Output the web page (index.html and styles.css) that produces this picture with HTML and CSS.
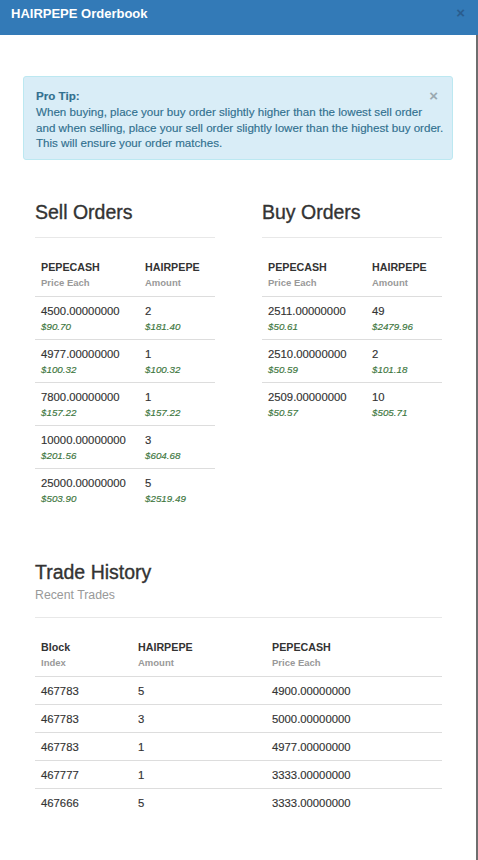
FILE: index.html
```html
<!DOCTYPE html>
<html>
<head>
<meta charset="utf-8">
<title>HAIRPEPE Orderbook</title>
<link rel="stylesheet" href="styles.css">
</head>
<body>
<div class="modal">
  <header class="modal-header">
    <h1 class="modal-title">HAIRPEPE Orderbook</h1>
    <span class="header-close">×</span>
  </header>
  <main class="modal-body">
    <div class="alert">
      <span class="alert-close">×</span>
      <strong>Pro Tip:</strong><br>
      When buying, place your buy order slightly higher than the lowest sell order<br>
      and when selling, place your sell order slightly lower than the highest buy order.<br>
      This will ensure your order matches.
    </div>

    <div class="books">
      <section class="book">
        <h2 class="section-title">Sell Orders</h2>
        <hr class="rule">
        <table class="orders">
          <thead>
            <tr><th class="c1">PEPECASH<small>Price Each</small></th><th>HAIRPEPE<small>Amount</small></th></tr>
          </thead>
          <tbody>
            <tr><td>4500.00000000<em>$90.70</em></td><td>2<em>$181.40</em></td></tr>
            <tr><td>4977.00000000<em>$100.32</em></td><td>1<em>$100.32</em></td></tr>
            <tr><td>7800.00000000<em>$157.22</em></td><td>1<em>$157.22</em></td></tr>
            <tr><td>10000.00000000<em>$201.56</em></td><td>3<em>$604.68</em></td></tr>
            <tr><td>25000.00000000<em>$503.90</em></td><td>5<em>$2519.49</em></td></tr>
          </tbody>
        </table>
      </section>
      <section class="book">
        <h2 class="section-title">Buy Orders</h2>
        <hr class="rule">
        <table class="orders">
          <thead>
            <tr><th class="c1">PEPECASH<small>Price Each</small></th><th>HAIRPEPE<small>Amount</small></th></tr>
          </thead>
          <tbody>
            <tr><td>2511.00000000<em>$50.61</em></td><td>49<em>$2479.96</em></td></tr>
            <tr><td>2510.00000000<em>$50.59</em></td><td>2<em>$101.18</em></td></tr>
            <tr><td>2509.00000000<em>$50.57</em></td><td>10<em>$505.71</em></td></tr>
          </tbody>
        </table>
      </section>
    </div>

    <section class="history">
      <h2 class="section-title">Trade History</h2>
      <p class="subtitle">Recent Trades</p>
      <hr class="rule">
      <table class="trades">
        <thead>
          <tr><th class="t1">Block<small>Index</small></th><th class="t2">HAIRPEPE<small>Amount</small></th><th>PEPECASH<small>Price Each</small></th></tr>
        </thead>
        <tbody>
          <tr><td>467783</td><td>5</td><td>4900.00000000</td></tr>
          <tr><td>467783</td><td>3</td><td>5000.00000000</td></tr>
          <tr><td>467783</td><td>1</td><td>4977.00000000</td></tr>
          <tr><td>467777</td><td>1</td><td>3333.00000000</td></tr>
          <tr><td>467666</td><td>5</td><td>3333.00000000</td></tr>
        </tbody>
      </table>
    </section>
  </main>
</div>
</body>
</html>
```

FILE: styles.css
```css
* { box-sizing: border-box; }
html, body { margin: 0; padding: 0; }
body {
  font-family: "Liberation Sans", Arial, sans-serif;
  color: #333;
  background: #fff;
  width: 478px;
  height: 860px;
  overflow: hidden;
}
.modal {
  width: 478px;
  height: 860px;
  display: flex;
  flex-direction: column;
  border-right: 2px solid #6e6e6e;
}
.modal-header {
  height: 35px;
  flex: none;
  background: #337ab7;
  display: flex;
  justify-content: space-between;
  align-items: flex-start;
  padding: 6px 13px 0 11px;
  margin-right: -2px;
}
.modal-title {
  margin: 0;
  font-size: 13px;
  line-height: 16px;
  font-weight: bold;
  color: #fff;
}
.header-close {
  font-size: 15px;
  line-height: 14px;
  font-weight: bold;
  color: #2a5d8e;
}
.modal-body {
  padding: 41px 23px 0 23px;
}
.alert {
  position: relative;
  width: 430px;
  background: #d9edf7;
  border: 1px solid #bce8f1;
  border-radius: 3px;
  color: #31708f;
  font-size: 11.6px;
  line-height: 15.8px;
  padding: 11px 12px 8px 12px;
  white-space: nowrap;
  -webkit-text-stroke: 0.15px #31708f;
}
.alert strong { font-weight: bold; }
.alert-close {
  position: absolute;
  top: 11px;
  right: 14px;
  font-size: 15px;
  line-height: 16px;
  font-weight: bold;
  color: #9aa9b1;
  -webkit-text-stroke: 0;
}
.books {
  display: grid;
  grid-template-columns: 180px 180px;
  column-gap: 47px;
  padding: 41px 0 0 12px;
}
.section-title {
  margin: 0;
  font-size: 19.5px;
  line-height: 22px;
  font-weight: normal;
  color: #333;
  -webkit-text-stroke: 0.35px #333;
}
.rule {
  margin: 14px 0 16px;
  border: 0;
  border-top: 1px solid #e8e8e8;
  height: 0;
}
table {
  border-collapse: collapse;
  width: 100%;
}
th, td {
  text-align: left;
  vertical-align: top;
  padding: 6px 6px 5px;
}
th {
  font-size: 10.7px;
  line-height: 15px;
  font-weight: bold;
  color: #333;
  border-bottom: 1px solid #ddd;
}
th small {
  display: block;
  font-size: 9.5px;
  line-height: 16px;
  color: #999;
  font-weight: bold;
}
.orders .c1 { width: 104px; }
.orders td {
  font-size: 11.3px;
  line-height: 16px;
  padding: 6px 6px 4px;
  border-top: 1px solid #ddd;
  -webkit-text-stroke: 0.15px #333;
}
.orders tbody tr:first-child td { border-top: 0; }
.orders td em {
  display: block;
  font-size: 9.8px;
  line-height: 16px;
  color: #3c763d;
  font-style: italic;
  -webkit-text-stroke: 0.15px #3c763d;
}
.history {
  padding: 50px 0 0 12px;
  width: 419px;
}
.subtitle {
  margin: 4px 0 0;
  font-size: 12.3px;
  line-height: 16px;
  color: #999;
}
.history .rule { margin: 14px 0 16px; }
.trades .t1 { width: 97px; }
.trades .t2 { width: 134px; }
.trades td {
  font-size: 11.3px;
  line-height: 16px;
  padding: 6px 6px 5px;
  border-top: 1px solid #ddd;
  -webkit-text-stroke: 0.15px #333;
}
.trades tbody tr:first-child td { border-top: 0; }
```
